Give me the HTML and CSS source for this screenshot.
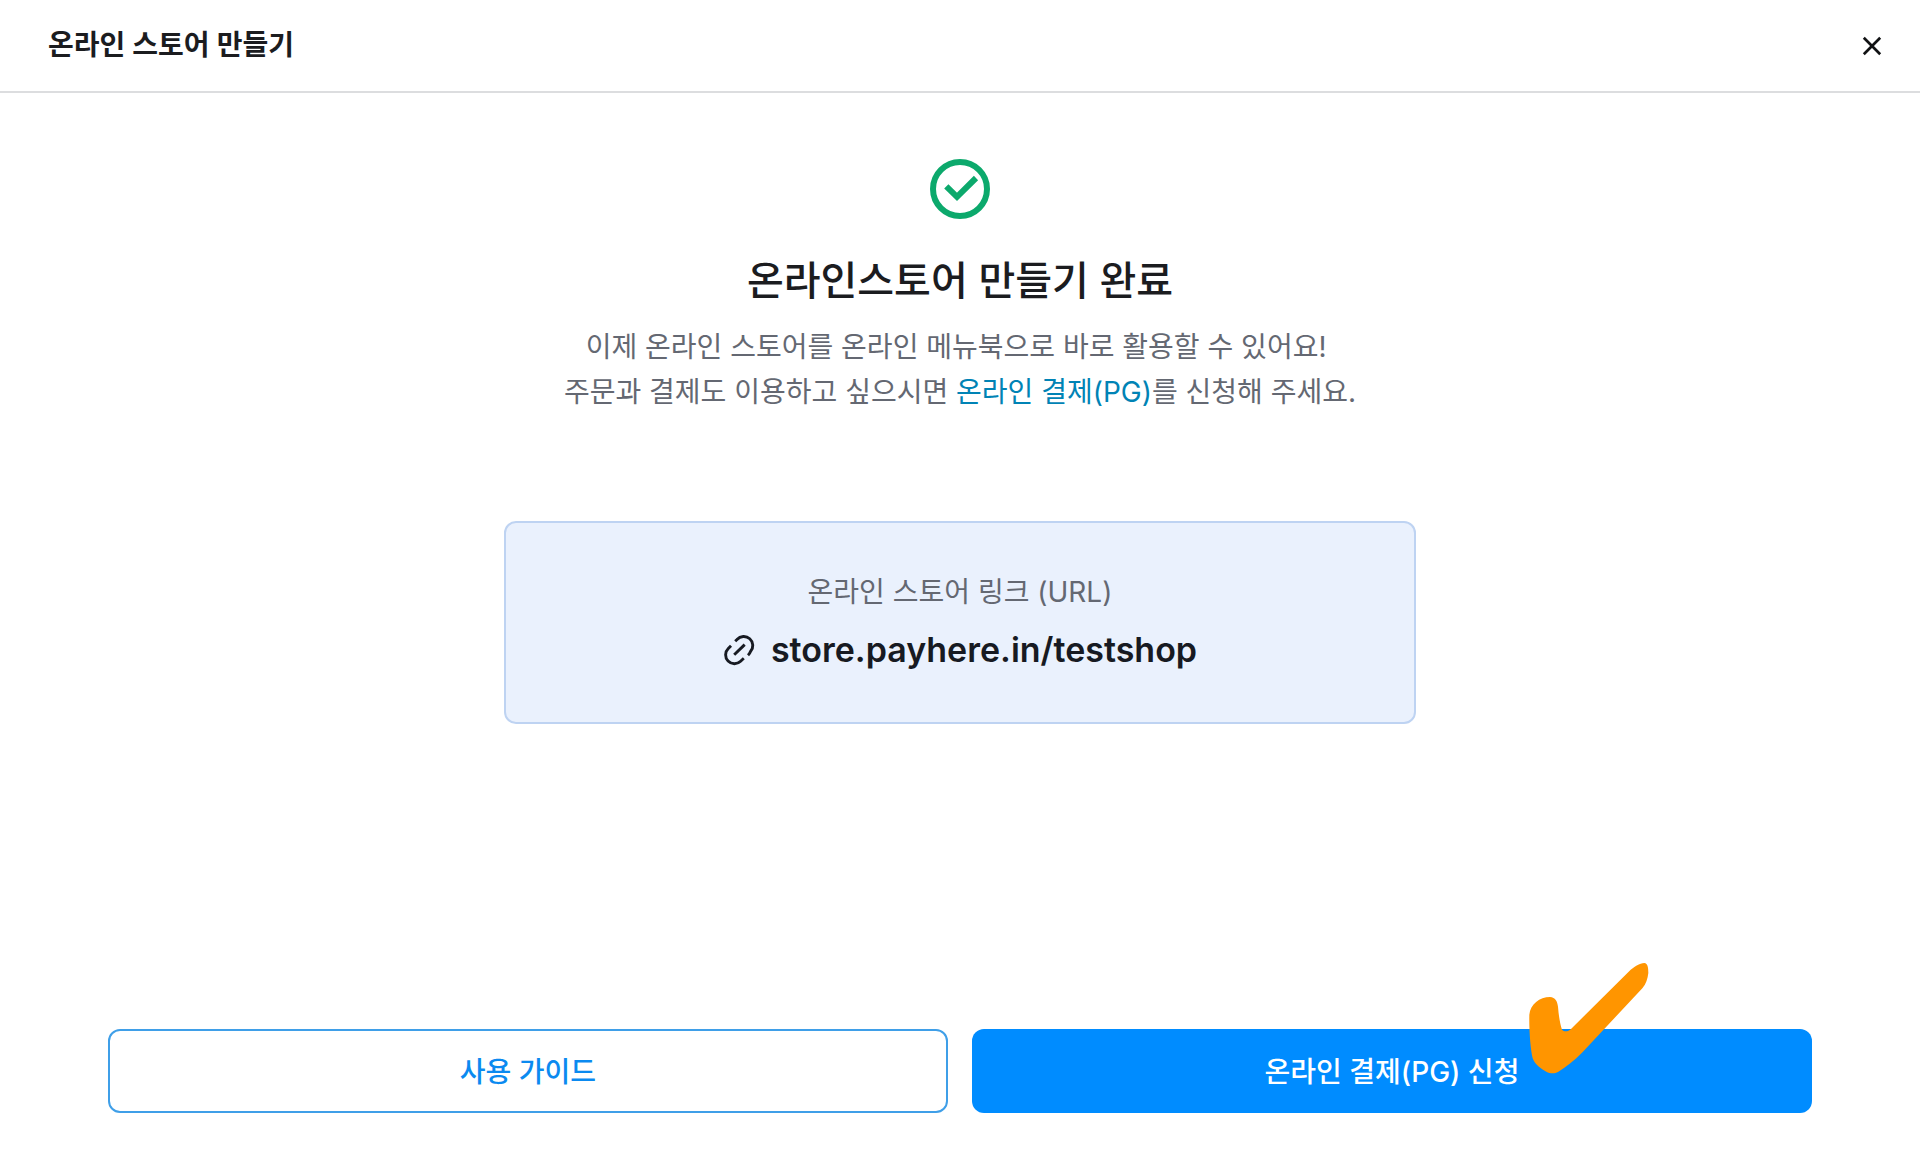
FILE: index.html
```html
<!DOCTYPE html>
<html lang="ko">
<head>
  <meta charset="utf-8">
  <meta name="viewport" content="width=device-width, initial-scale=1">
  <title>온라인 스토어 만들기</title>
  <link rel="stylesheet" href="styles.css">
</head>
<body>
  <div class="page">
    <header class="topbar">
      <h2 class="topbar-title">온라인 스토어 만들기</h2>
      <button class="close" type="button" aria-label="닫기">
        <svg width="20" height="20" viewBox="0 0 20 20" aria-hidden="true">
          <path d="M1.8 1.8 18.2 18.2M18.2 1.8 1.8 18.2" fill="none" stroke="currentColor" stroke-width="2.7"/>
        </svg>
      </button>
    </header>

    <main class="content">
      <svg class="done-icon" width="60" height="60" viewBox="0 0 60 60" aria-hidden="true">
        <circle cx="30" cy="30" r="27" fill="none" stroke="currentColor" stroke-width="6"/>
        <path d="M16.3 27.3 27 37.8 46 19" fill="none" stroke="currentColor" stroke-width="6"/>
      </svg>
      <h1 class="title">온라인스토어 만들기 완료</h1>
      <p class="description">
        이제 온라인 스토어를 온라인 메뉴북으로 바로 활용할 수 있어요!&nbsp;<br>
        주문과 결제도 이용하고 싶으시면 <a class="inline-link" href="#payment">온라인 결제(PG)</a>를 신청해 주세요.
      </p>

      <section class="link-card">
        <p class="link-label">온라인 스토어 링크 (URL)</p>
        <a class="store-link" href="#store">
          <svg width="32" height="32" viewBox="0 0 32 32" fill="none" stroke="currentColor" stroke-width="2.9" aria-hidden="true">
            <path d="M12.2 7.2 14 5.5A8.7 8.7 0 0 1 27.5 17.5a10 10 0 0 1-2.5 3.8"/>
            <path d="M8 11.8 5.3 14.5A8.7 8.7 0 0 0 17.6 27.2L20.8 24.3"/>
            <path d="m11.2 20.8 10.5-10.2"/>
          </svg>
          <span>store.payhere.in/testshop</span>
        </a>
      </section>
    </main>

    <footer class="actions">
      <button class="button button-outline" type="button">사용 가이드</button>
      <button class="button button-primary" type="button">
        온라인 결제(PG) 신청
        <svg class="marker" width="122" height="112" viewBox="84 66 366 336" aria-hidden="true">
          <path fill="#ff9500" d="M150 171C166 172 172 184 174 200C176 224 179 248 186 269C193 277 205 275 213 267L386 95C402 80 419 70 433 69C443 70 445 82 445 99C443 116 438 133 427 145L246 338C222 362 198 381 174 396C163 402 149 400 139 395C123 387 105 374 98 355C91 324 87 270 88 224C91 193 119 171 150 171Z"/>
        </svg>
      </button>
    </footer>
  </div>
</body>
</html>
```

FILE: styles.css
```css
* {
  box-sizing: border-box;
}

body {
  margin: 0;
  background: #fff;
  color: #1b1c1f;
  font-family: Inter, "Noto Sans CJK KR", sans-serif;
}

h1,
h2,
p {
  margin: 0;
}

button {
  font: inherit;
  cursor: pointer;
}

a {
  text-decoration: none;
}

svg {
  display: block;
}

.page {
  display: flex;
  flex-direction: column;
  min-height: 100vh;
}

.topbar {
  display: flex;
  align-items: center;
  justify-content: space-between;
  padding: 24px 36px 24px 48px;
  border-bottom: 2px solid #dcdddf;
}

.topbar-title {
  font-size: 28px;
  font-weight: 600;
  line-height: 43px;
}

.close {
  padding: 2px;
  border: 0;
  background: none;
  color: #111214;
}

.content {
  display: flex;
  flex-direction: column;
  align-items: center;
  padding: 66px 24px 48px;
}

.done-icon {
  color: #0ca96c;
}

.title {
  margin-top: 32px;
  font-size: 40px;
  font-weight: 500;
  line-height: 60px;
  text-align: center;
}

.description {
  margin-top: 14px;
  color: #646872;
  font-size: 28px;
  line-height: 45px;
  text-align: center;
}

.inline-link {
  color: #0083b5;
}

.link-card {
  display: flex;
  flex-direction: column;
  align-items: center;
  gap: 12px;
  width: 100%;
  max-width: 912px;
  margin-top: 106px;
  padding: 48px 24px;
  border: 2px solid #bed3f2;
  border-radius: 12px;
  background: #eaf1fd;
}

.link-label {
  color: #646872;
  font-size: 28px;
  line-height: 43px;
}

.store-link {
  display: flex;
  align-items: center;
  gap: 16px;
  color: #171a22;
  font-size: 34px;
  font-weight: 600;
  line-height: 48px;
}

.actions {
  display: grid;
  grid-template-columns: 1fr 1fr;
  gap: 24px;
  margin-top: auto;
  padding: 0 108px 48px;
}

.button {
  position: relative;
  height: 84px;
  padding: 0 24px 2px;
  border-radius: 12px;
  font-size: 28px;
  font-weight: 500;
}

.button-outline {
  border: 2px solid #3f9fe8;
  background: #fff;
  color: #0b8af0;
}

.button-primary {
  border: 0;
  background: #008cff;
  color: #fff;
}

.marker {
  position: absolute;
  bottom: 39px;
  left: calc(50% + 136px);
}
```
